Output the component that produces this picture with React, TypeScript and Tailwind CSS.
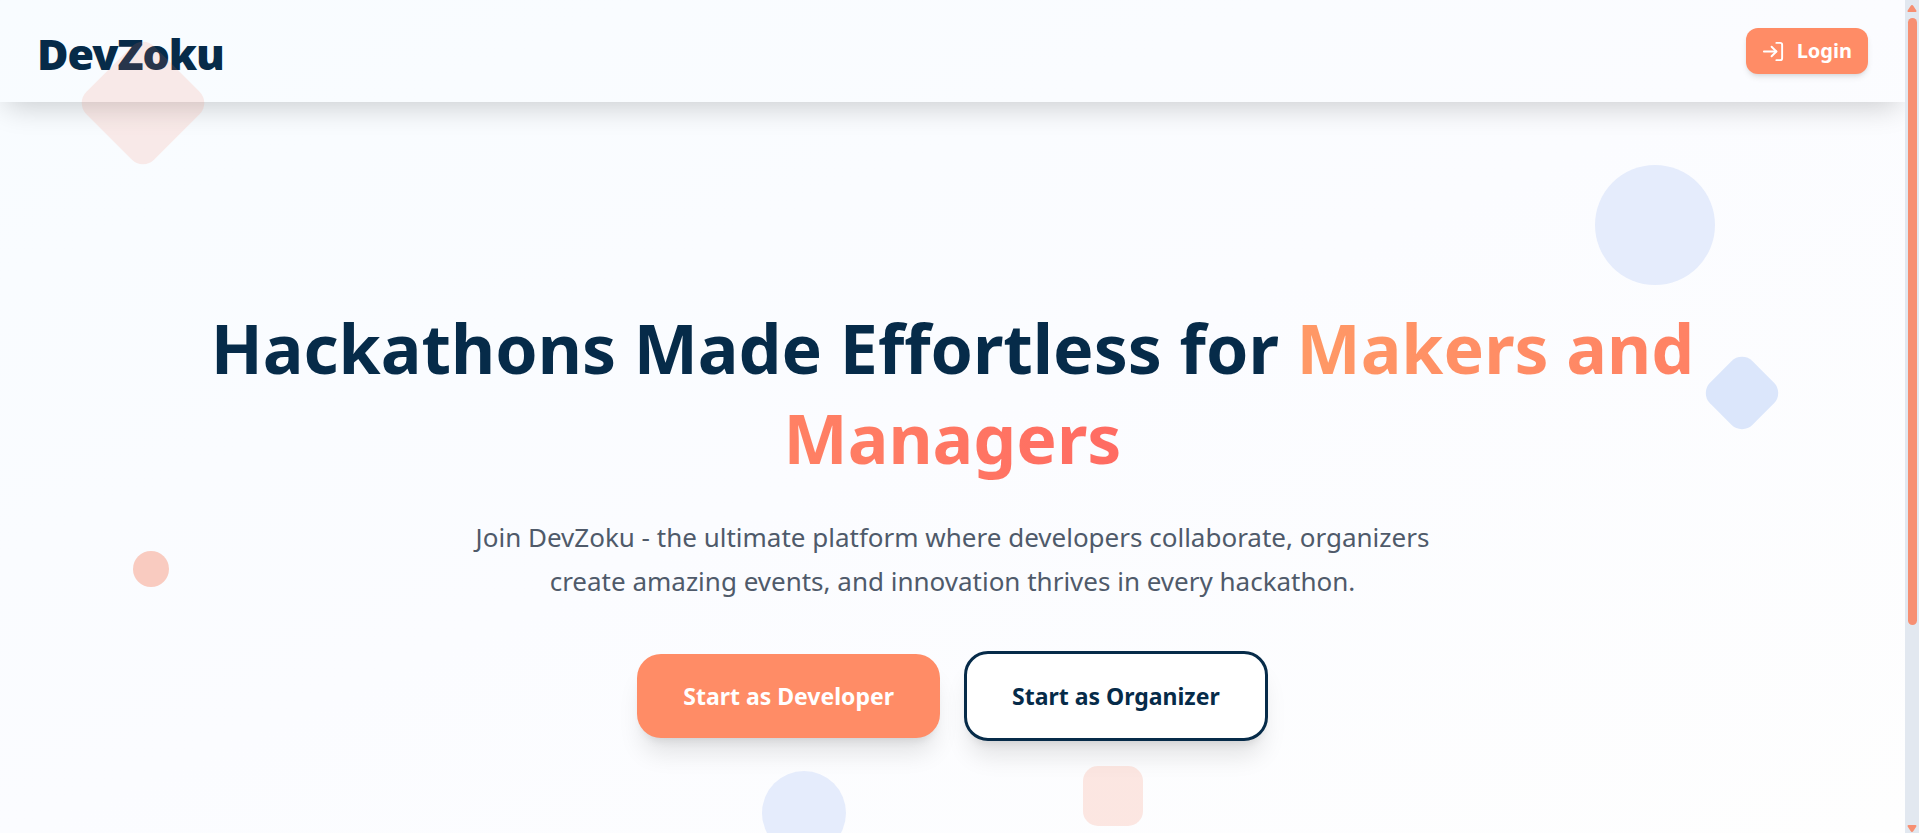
function LoginIcon() {
  return (
    <svg
      className="h-[23px] w-[23px]"
      viewBox="0 0 24 24"
      fill="none"
      stroke="currentColor"
      strokeWidth="2"
      strokeLinecap="round"
      strokeLinejoin="round"
      aria-hidden="true"
    >
      <path d="M15 3h4a2 2 0 0 1 2 2v14a2 2 0 0 1-2 2h-4" />
      <path d="m10 17 5-5-5-5" />
      <path d="M15 12H2" />
    </svg>
  );
}

function Header() {
  return (
    <header className="flex h-[102px] items-center justify-between px-[37px] shadow-[0_10px_30px_-6px_rgba(0,0,0,0.2)]">
      <a href="#" className="pt-1 text-[43px] leading-none font-black tracking-tight text-[#062b49]">
        DevZoku
      </a>
      <button
        type="button"
        className="flex h-[46px] items-center gap-3 rounded-xl bg-[#ff8c66] px-4 text-xl font-bold text-white shadow-md"
      >
        <LoginIcon />
        Login
      </button>
    </header>
  );
}

function Shapes() {
  return (
    <div className="pointer-events-none absolute inset-0 overflow-hidden" aria-hidden="true">
      <div className="absolute top-[55px] left-[5%] h-24 w-24 rotate-45 rounded-2xl bg-[#f8785a]/14" />
      <div className="absolute top-[165px] right-[10%] h-[120px] w-[120px] rounded-full bg-[#e5ecfc]" />
      <div className="absolute top-[363px] right-[7%] h-[60px] w-[60px] rotate-45 rounded-[15px] bg-[#dbe6fb]" />
      <div className="absolute top-[551px] left-[7%] h-9 w-9 rounded-full bg-[#f9cbc0]" />
      <div className="absolute top-[771px] left-[40%] h-[84px] w-[84px] rounded-full bg-[#e5ecfc]" />
      <div className="absolute top-[766px] right-[40%] h-[60px] w-[60px] rounded-[15px] bg-[#fb8e70]/20" />
    </div>
  );
}

function Hero() {
  return (
    <section className="relative flex flex-1 flex-col items-center px-8 pt-[201px] text-center">
      <h1 className="max-w-[1536px] text-[68px] leading-[90px] font-bold text-[#062b49]">
        Hackathons Made Effortless for{" "}
        <span className="bg-gradient-to-r from-[#ff9966] to-[#ff6b62] bg-clip-text text-transparent">
          Makers and Managers
        </span>
      </h1>
      <p className="mt-8 max-w-[960px] text-[26px] leading-[44px] text-[#4f5a6a]">
        Join DevZoku - the ultimate platform where developers collaborate, organizers create amazing
        events, and innovation thrives in every hackathon.
      </p>
      <div className="mt-12 flex flex-wrap items-center justify-center gap-6">
        <button
          type="button"
          className="h-[84px] rounded-3xl bg-[#ff8c66] px-[46px] text-[23px] font-bold text-white shadow-xl"
        >
          Start as Developer
        </button>
        <button
          type="button"
          className="h-[90px] rounded-3xl border-3 border-[#062b49] bg-white px-[45px] text-[23px] font-bold text-[#062b49] shadow-xl"
        >
          Start as Organizer
        </button>
      </div>
    </section>
  );
}

function ScrollRail() {
  return (
    <div className="flex w-[14px] shrink-0 flex-col items-center bg-[#e2e8f0] text-[#f78f72]" aria-hidden="true">
      <svg className="mt-1 h-2 w-[10px]" viewBox="0 0 10 8" fill="currentColor">
        <path d="M5 1c.6 0 1 .4 1.400 1l2.800 4.200C9.700 7 9.500 8 8.500 8h-7C.5 8 .3 7 .8 6.200L3.600 2C4 1.400 4.400 1 5 1Z" />
      </svg>
      <div className="mt-[6px] w-[9px] flex-[607] rounded-full bg-[#f78f72]" />
      <div className="flex-[200]" />
      <svg className="mb-px h-[7px] w-[10px]" viewBox="0 0 10 7" fill="currentColor">
        <path d="M5 7c-.6 0-1-.4-1.400-1L.8 1.800C.3 1 .5 0 1.500 0h7c1 0 1.200 1 .7 1.800L6.400 6C6 6.600 5.600 7 5 7Z" />
      </svg>
    </div>
  );
}

export default function App() {
  return (
    <div className="flex min-h-screen font-['Noto_Sans','Open_Sans',sans-serif]">
      <main className="relative flex min-w-0 flex-1 flex-col overflow-hidden bg-gradient-to-br from-[#f8fcff] via-[#fbfcff] to-[#fefefe]">
        <Header />
        <Hero />
        <Shapes />
      </main>
      <ScrollRail />
    </div>
  );
}
